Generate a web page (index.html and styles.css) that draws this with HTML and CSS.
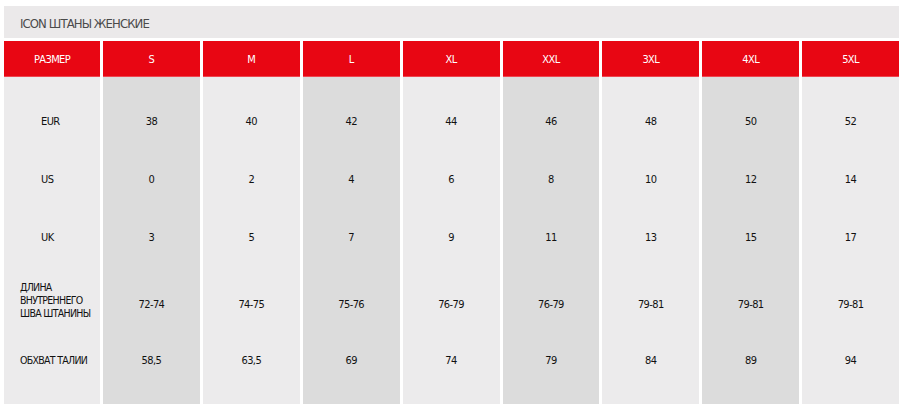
FILE: index.html
```html
<!DOCTYPE html>
<html lang="ru">
<head>
<meta charset="utf-8">
<title>ICON ШТАНЫ ЖЕНСКИЕ</title>
<link rel="stylesheet" href="styles.css">
</head>
<body>
<div class="page">
  <div class="title">ICON ШТАНЫ ЖЕНСКИЕ</div>
  <div class="table">
    <div class="hd">РАЗМЕР</div>
    <div class="hd">S</div>
    <div class="hd">M</div>
    <div class="hd">L</div>
    <div class="hd">XL</div>
    <div class="hd">XXL</div>
    <div class="hd">3XL</div>
    <div class="hd">4XL</div>
    <div class="hd">5XL</div>

    <div class="c lab short first">EUR</div>
    <div class="c dk first">38</div>
    <div class="c first">40</div>
    <div class="c dk first">42</div>
    <div class="c first">44</div>
    <div class="c dk first">46</div>
    <div class="c first">48</div>
    <div class="c dk first">50</div>
    <div class="c first">52</div>

    <div class="c lab short">US</div>
    <div class="c dk">0</div>
    <div class="c">2</div>
    <div class="c dk">4</div>
    <div class="c">6</div>
    <div class="c dk">8</div>
    <div class="c">10</div>
    <div class="c dk">12</div>
    <div class="c">14</div>

    <div class="c lab short">UK</div>
    <div class="c dk">3</div>
    <div class="c">5</div>
    <div class="c dk">7</div>
    <div class="c">9</div>
    <div class="c dk">11</div>
    <div class="c">13</div>
    <div class="c dk">15</div>
    <div class="c">17</div>

    <div class="c lab multi">ДЛИНА<br>ВНУТРЕННЕГО<br>ШВА ШТАНИНЫ</div>
    <div class="c dk mid">72-74</div>
    <div class="c mid">74-75</div>
    <div class="c dk mid">75-76</div>
    <div class="c mid">76-79</div>
    <div class="c dk mid">76-79</div>
    <div class="c mid">79-81</div>
    <div class="c dk mid">79-81</div>
    <div class="c mid">79-81</div>

    <div class="c lab last">ОБХВАТ ТАЛИИ</div>
    <div class="c dk last">58,5</div>
    <div class="c last">63,5</div>
    <div class="c dk last">69</div>
    <div class="c last">74</div>
    <div class="c dk last">79</div>
    <div class="c last">84</div>
    <div class="c dk last">89</div>
    <div class="c last">94</div>
  </div>
</div>
</body>
</html>
```

FILE: styles.css
```css
html, body {
  margin: 0;
  padding: 0;
  background: #ffffff;
}

body {
  font-family: "DejaVu Sans Condensed", "Liberation Sans Narrow", Roboto, sans-serif;
  color: #111111;
}

.page {
  padding: 6px 0 0 4px;
  width: 895px;
  display: flex;
  flex-direction: column;
  gap: 3px;
}

.title {
  height: 32px;
  background: #ebe9ea;
  color: #4a4a4a;
  font-size: 13px;
  letter-spacing: -0.9px;
  display: flex;
  align-items: center;
  padding: 3px 0 0 16px;
  box-sizing: border-box;
}

.table {
  display: grid;
  grid-template-columns: 96px repeat(8, 1fr);
  grid-template-rows: 36px 73px 58px 58px 65px 73px;
  column-gap: 3px;
}

.hd {
  background: #e80613;
  border-bottom: 1px solid #ee4550;
  box-sizing: border-box;
  color: #ffffff;
  font-size: 11px;
  letter-spacing: -0.6px;
  display: flex;
  align-items: center;
  justify-content: center;
  padding-top: 1px;
}

.c {
  background: #ecebec;
  font-size: 11px;
  letter-spacing: -0.6px;
  display: flex;
  align-items: center;
  justify-content: center;
  box-sizing: border-box;
}

.c.dk {
  background: #dcdcdc;
}

.c.lab {
  justify-content: flex-start;
  padding-left: 16px;
  line-height: 13px;
  font-size: 10.5px;
  letter-spacing: -0.7px;
}

.c.lab.short {
  padding-left: 37px;
  font-size: 11px;
  letter-spacing: -0.6px;
}

.c.first {
  padding-top: 15px;
}

.c.last {
  padding-bottom: 15px;
}

.c.mid {
  padding-top: 11px;
}

.c.multi {
  padding-top: 3px;
}
```
